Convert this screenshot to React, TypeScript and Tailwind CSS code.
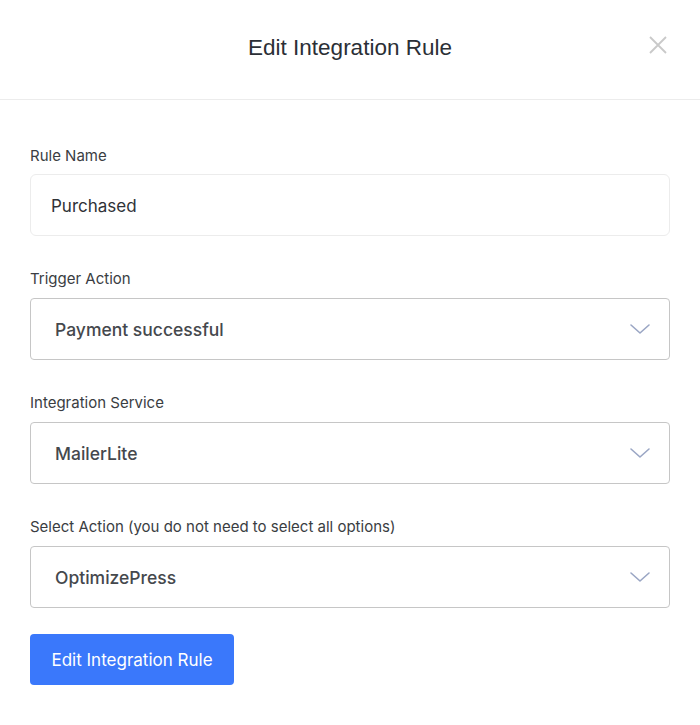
const fields = [
  { label: "Trigger Action", value: "Payment successful" },
  { label: "Integration Service", value: "MailerLite" },
  { label: "Select Action (you do not need to select all options)", value: "OptimizePress" },
];

function Chevron() {
  return (
    <svg width="22" height="14" viewBox="0 0 22 14" fill="none">
      <path d="M2 3 L11 11 L20 3" stroke="#9aa6c4" strokeWidth="1.6" strokeLinecap="round" strokeLinejoin="round" />
    </svg>
  );
}

export default function App() {
  return (
    <div className="w-[700px] h-[725px] bg-white font-['Inter',sans-serif]">
      <div className="relative h-[100px] border-b border-[#ececec] flex items-center justify-center">
        <h2 className="text-[22.5px] text-[#2b2f36] font-['Liberation_Sans',sans-serif] -mt-[4px]">Edit Integration Rule</h2>
        <button className="absolute right-[32px] top-[35px] w-[20px] h-[20px] flex items-center justify-center">
          <svg width="18" height="18" viewBox="0 0 18 18" fill="none">
            <path d="M1 1 L17 17 M17 1 L1 17" stroke="#c9c9c9" strokeWidth="1.8" />
          </svg>
        </button>
      </div>

      <div className="px-[30px] pt-[46px]">
        <label className="block text-[15px] text-[#3a3d42] leading-[20px]">Rule Name</label>
        <div className="mt-[8px] h-[62px] border border-[#ececec] rounded-[6px] flex items-center px-[20px] pt-[4px] text-[17px] text-[#2f3237]">
          Purchased
        </div>

        {fields.map((f) => (
          <div key={f.label} className="mt-[33px]">
            <label className="block text-[15px] text-[#3a3d42] leading-[20px]">{f.label}</label>
            <div className="mt-[9px] h-[62px] border border-[#c6c6c6] rounded-[4px] flex items-center justify-between pl-[24px] pr-[18px]">
              <span className="text-[17.5px] font-medium text-[#45484d] pt-[2px]">{f.value}</span>
              <Chevron />
            </div>
          </div>
        ))}

        <button className="mt-[26px] h-[51px] w-[204px] bg-[#3a78fb] rounded-[4px] text-white text-[17px] pt-[3px] flex items-center justify-center">
          Edit Integration Rule
        </button>
      </div>
    </div>
  );
}
